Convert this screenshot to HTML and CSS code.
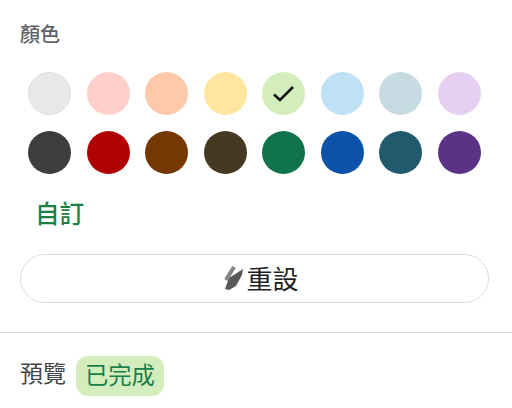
FILE: index.html
```html
<!DOCTYPE html>
<html lang="zh-Hant">
<head>
    <meta charset="UTF-8">
    <meta name="viewport" content="width=device-width, initial-scale=1.0">
    <title>顏色</title>
    <link rel="stylesheet" href="styles.css">
</head>
<body>
<div class="panel">
    <h2 class="title">顏色</h2>
    <div class="swatches">
        <div class="swatch light-gray"></div>
        <div class="swatch light-red"></div>
        <div class="swatch light-orange"></div>
        <div class="swatch light-yellow"></div>
        <div class="swatch light-green">
            <svg width="24" height="24" viewBox="0 0 24 24"><path d="M2 12.5l6 5.5L21 5" fill="none" stroke="#111" stroke-width="2.6"/></svg>
        </div>
        <div class="swatch light-blue"></div>
        <div class="swatch light-teal"></div>
        <div class="swatch light-purple"></div>
        <div class="swatch dark-gray"></div>
        <div class="swatch dark-red"></div>
        <div class="swatch dark-orange"></div>
        <div class="swatch dark-yellow"></div>
        <div class="swatch dark-green"></div>
        <div class="swatch dark-blue"></div>
        <div class="swatch dark-teal"></div>
        <div class="swatch dark-purple"></div>
    </div>
    <div class="custom">自訂</div>
    <button class="reset-btn" type="button">
        <svg class="reset-icon" width="22" height="25" viewBox="0 0 22 25"><path d="M3 23L7 12 21 3 20 9 14 20 7 24z" fill="#595959"/><path d="M12 1L4 14" stroke="#858585" stroke-width="4" fill="none"/></svg>
        <span class="reset-text">重設</span>
    </button>
</div>
<div class="preview">
    <span class="preview-label">預覽</span>
    <span class="chip">已完成</span>
</div>
</body>
</html>
```

FILE: styles.css
```css
body { margin:0; background:#fff; font-family:"Roboto","Noto Sans CJK TC",sans-serif; overflow:hidden; }
.panel { padding:21px 23px 29px 20px; border-bottom:1px solid #dadce0; }
.title { margin:0; font-size:20px; line-height:28px; font-weight:500; color:#5f6368; }
.swatches { display:grid; grid-template-columns:repeat(8,43px); justify-content:space-between; row-gap:16px; margin:23px 8px 0 8px; }
.swatch { width:43px; height:43px; border-radius:50%; box-sizing:border-box; display:flex; align-items:center; justify-content:center; }
.light-gray { background:#e8e8e8; border:1px solid #dedede; }
.light-red { background:#ffcfc9; }
.light-orange { background:#ffc8aa; }
.light-yellow { background:#ffe5a0; }
.light-green { background:#d4edbc; }
.light-blue { background:#bfe1f6; }
.light-teal { background:#c6dbe1; }
.light-purple { background:#e6cff2; border:1px solid #e3d5ea; }
.dark-gray { background:#3d3d3d; }
.dark-red { background:#b10202; }
.dark-orange { background:#753800; }
.dark-yellow { background:#473821; }
.dark-green { background:#11734b; }
.dark-blue { background:#0a53a8; }
.dark-teal { background:#215a6c; }
.dark-purple { background:#5a3286; }
.custom { margin:23px 0 0 15px; font-size:24.5px; line-height:36px; font-weight:500; color:#1a8045; }
.reset-btn { display:flex; align-items:center; justify-content:center; gap:2px; width:100%; height:49px; margin-top:21px; padding:0 0 0 12px; background:#fff; border:1px solid #dadce0; border-radius:25px; font:inherit; font-size:26px; color:#1f1f1f; }
.reset-text { margin-top:-3px; }
.preview { display:flex; align-items:center; gap:10px; padding:23px 20px 0; }
.preview-label { font-size:23px; line-height:40px; color:#444746; margin-top:-3px; }
.chip { padding:0 9px; height:40px; line-height:40px; border-radius:12px; background:#d4edbc; color:#1a7f4b; font-size:23.3px; }
```
